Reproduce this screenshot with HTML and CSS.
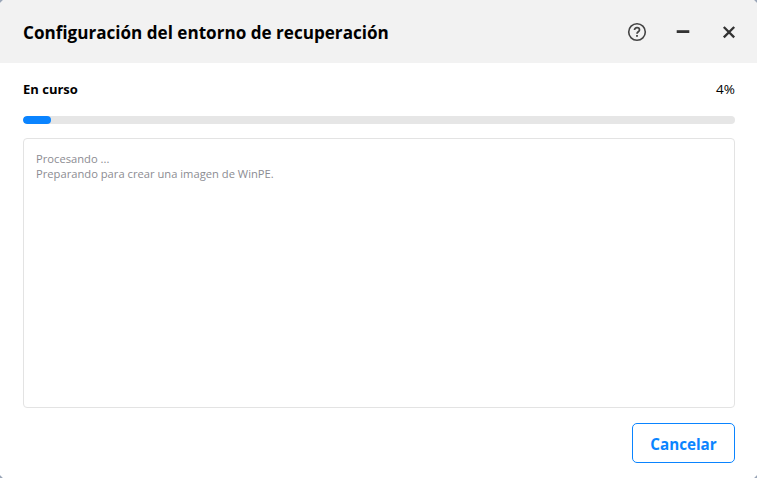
FILE: index.html
```html
<!DOCTYPE html>
<html lang="es">
<head>
<meta charset="utf-8">
<title>Configuración del entorno de recuperación</title>
<link rel="stylesheet" href="styles.css">
</head>
<body>
<div class="dialog">
  <header class="head">
    <h1 class="title">Configuración del entorno de recuperación</h1>
    <div class="actions">
      <svg class="icon" width="20" height="20" viewBox="0 0 20 20"><circle cx="10" cy="10" r="8.3" fill="none" stroke="#444" stroke-width="1.6"/><path d="M7.5 8.1c0-1.5 1-2.5 2.5-2.5s2.5 1 2.5 2.3c0 1.9-2.5 1.9-2.5 3.8" fill="none" stroke="#444" stroke-width="1.7"/><rect x="9.1" y="13" width="1.8" height="1.8" fill="#444"/></svg>
      <svg class="icon" width="20" height="20" viewBox="0 0 20 20"><path d="M3.7 9.6h12.6" stroke="#333" stroke-width="2.8"/></svg>
      <svg class="icon" width="20" height="20" viewBox="0 0 20 20"><path d="M4.8 5l10.4 10.4M15.2 5l-10.4 10.4" stroke="#333" stroke-width="2.3"/></svg>
    </div>
  </header>
  <main class="body">
    <div class="status">
      <span class="label">En curso</span>
      <span class="pct">4%</span>
    </div>
    <div class="track"><div class="fill" style="width:4%"></div></div>
    <div class="log">
      <div>Procesando ...</div>
      <div>Preparando para crear una imagen de WinPE.</div>
    </div>
    <div class="foot"><button class="btn">Cancelar</button></div>
  </main>
</div>
</body>
</html>
```
FILE: styles.css
```css
* { box-sizing: border-box; }
html, body { margin: 0; padding: 0; height: 100%; background: #fff; }
body { font-family: "Open Sans", "Noto Sans", sans-serif; color: #000; overflow: hidden; }
.dialog { position: relative; width: 757px; height: 478px; display: flex; flex-direction: column; }
.dialog::after {
  content: "";
  position: absolute;
  inset: 0;
  pointer-events: none;
  background-repeat: no-repeat;
  background-size: 3px 3px;
  background-position: left top, right top, left bottom, right bottom;
  background-image:
    linear-gradient(135deg, #9aa6b8 0 1.5px, transparent 2.5px),
    linear-gradient(225deg, #9aa6b8 0 1.5px, transparent 2.5px),
    linear-gradient(45deg, #9aa6b8 0 1.5px, transparent 2.5px),
    linear-gradient(315deg, #9aa6b8 0 1.5px, transparent 2.5px);
}
.head { height: 63px; background: #f2f2f2; display: flex; align-items: center; justify-content: space-between; padding: 0 18px 0 23px; }
.title { margin: 0; padding-top: 2px; font-size: 17.1px; font-weight: 700; line-height: 24px; }
.actions { display: flex; gap: 26px; }
.icon { display: block; }
.body { flex: 1; display: flex; flex-direction: column; padding: 16px 22px 15px 23px; }
.status { display: flex; justify-content: space-between; align-items: center; height: 20px; }
.label { font-size: 13px; font-weight: 700; }
.pct { font-size: 13.5px; }
.track { height: 8px; margin-top: 17px; background: #e6e6e6; border-radius: 4px; overflow: hidden; }
.fill { height: 100%; background: #0a84ff; border-radius: 4px; }
.log { flex: 1; margin-top: 14px; border: 1px solid #e3e3e3; border-radius: 4px; padding: 12px; font-size: 11.2px; line-height: 15px; color: #8c8c92; }
.foot { display: flex; justify-content: flex-end; margin-top: 15px; }
.btn { width: 103px; height: 40px; background: #fff; border: 1px solid #0a84ff; border-radius: 5px; color: #0a84ff; font: 700 15.2px "Open Sans", sans-serif; padding: 2px 0 0; }
```
